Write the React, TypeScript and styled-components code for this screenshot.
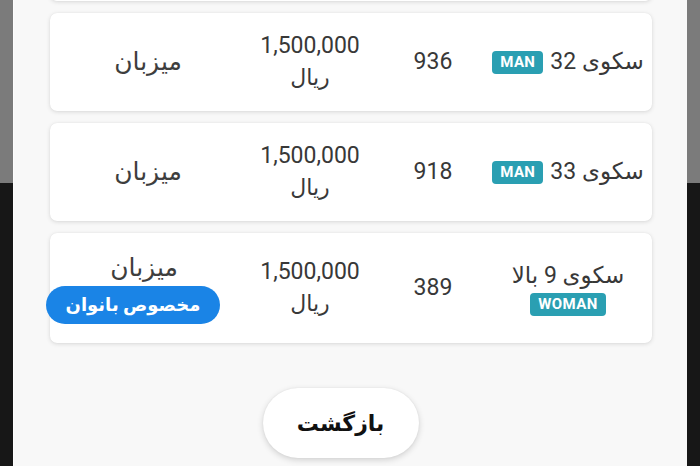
import React, { useLayoutEffect, useRef } from "react";
import styled, { createGlobalStyle } from "styled-components";

const Global = createGlobalStyle`
  html, body { margin: 0; padding: 0; height: 100%; }
  body {
    background: linear-gradient(to bottom, #7b7b7b 0, #7b7b7b 183px, #171717 183px, #171717 100%);
    font-family: Roboto, "DejaVu Sans", sans-serif;
    overflow: hidden;
  }
  #root { height: 100%; }
`;

const Screen = styled.div`
  height: 466px;
  width: 700px;
  display: flex;
  justify-content: center;
`;

const Panel = styled.div`
  width: 674px;
  height: 100%;
  background: #f8f8f8;
  border-left: 1px solid #fdfdfd;
  display: flex;
  flex-direction: column;
  box-sizing: border-box;
  direction: rtl;
`;

const ScrollArea = styled.div`
  flex: 1;
  overflow: hidden;
`;

const List = styled.div`
  display: flex;
  flex-direction: column;
  gap: 12px;
  padding: 12px 35px 40px 36px;
`;

const Card = styled.div<{ $tall?: boolean }>`
  background: #ffffff;
  border-radius: 7px;
  box-shadow: 0 1px 4px rgba(0, 0, 0, 0.13), 0 0 1px rgba(0, 0, 0, 0.08);
  display: grid;
  grid-template-columns: 160px 110px 136px 1fr;
  align-items: center;
  padding: ${(p) => (p.$tall ? "18px" : "17px")} 4px;
  min-height: ${(p) => (p.$tall ? "74px" : "64px")};
  color: #383838;
`;

const NameCell = styled.div<{ $stack?: boolean }>`
  display: flex;
  flex-direction: ${(p) => (p.$stack ? "column" : "row")};
  align-items: center;
  justify-content: center;
  gap: ${(p) => (p.$stack ? "1px" : "7px")};
  font-size: 23px;
  line-height: 32px;
  white-space: nowrap;
`;

const Badge = styled.span`
  direction: ltr;
  display: inline-flex;
  align-items: center;
  height: 23px;
  padding: 0 8px;
  border-radius: 4px;
  background: #2a9fb2;
  color: #ffffff;
  font-family: Roboto, sans-serif;
  font-weight: 700;
  font-size: 15px;
  letter-spacing: 0.4px;
  line-height: 1;
`;

const NumberCell = styled.div`
  text-align: center;
  font-size: 23px;
  line-height: 32px;
`;

const PriceCell = styled.div`
  display: flex;
  flex-direction: column;
  align-items: center;
  font-size: 22px;
  line-height: 32px;
`;

const Amount = styled.span`
  direction: ltr;
  font-size: 23px;
`;

const HostCell = styled.div`
  display: flex;
  flex-direction: column;
  align-items: center;
  font-size: 25px;
  line-height: 32px;
  color: #3e3e3e;
`;

const WomenPill = styled.span`
  display: inline-flex;
  align-items: center;
  justify-content: center;
  width: 174px;
  height: 38px;
  margin-top: 2px;
  margin-right: 22px;
  border-radius: 19px;
  background: #1a84e6;
  color: #ffffff;
  font-size: 18px;
  font-weight: 700;
  line-height: 1;
`;

const Footer = styled.div`
  display: flex;
  justify-content: center;
  padding: 20px 20px 8px 0;
`;

const BackButton = styled.button`
  width: 156px;
  height: 70px;
  border: none;
  border-radius: 35px;
  background: #ffffff;
  box-shadow: 0 2px 6px rgba(0, 0, 0, 0.16), 0 0 2px rgba(0, 0, 0, 0.06);
  font-family: "DejaVu Sans", sans-serif;
  font-weight: 700;
  font-size: 22px;
  color: #111111;
  cursor: pointer;
`;

type Row = {
  name: string;
  badge: string;
  num: string;
  women?: boolean;
};

const rows: Row[] = [
  { name: "سکوی 32", badge: "MAN", num: "936" },
  { name: "سکوی 33", badge: "MAN", num: "918" },
  { name: "سکوی 9 بالا", badge: "WOMAN", num: "389", women: true },
];

export default function App() {
  const ref = useRef<HTMLDivElement>(null);
  useLayoutEffect(() => {
    if (ref.current) ref.current.scrollTop = 109;
  }, []);
  return (
    <>
      <Global />
      <Screen>
        <Panel>
          <ScrollArea ref={ref}>
            <List>
              <Card aria-hidden="true" />
              {rows.map((r) => (
                <Card key={r.name} $tall={r.women}>
                  <NameCell $stack={r.women}>
                    <span>{r.name}</span>
                    <Badge>{r.badge}</Badge>
                  </NameCell>
                  <NumberCell>{r.num}</NumberCell>
                  <PriceCell>
                    <Amount>1,500,000</Amount>
                    <span>ریال</span>
                  </PriceCell>
                  <HostCell>
                    <span>میزبان</span>
                    {r.women && <WomenPill>مخصوص بانوان</WomenPill>}
                  </HostCell>
                </Card>
              ))}
            </List>
          </ScrollArea>
          <Footer>
            <BackButton>بازگشت</BackButton>
          </Footer>
        </Panel>
      </Screen>
    </>
  );
}
